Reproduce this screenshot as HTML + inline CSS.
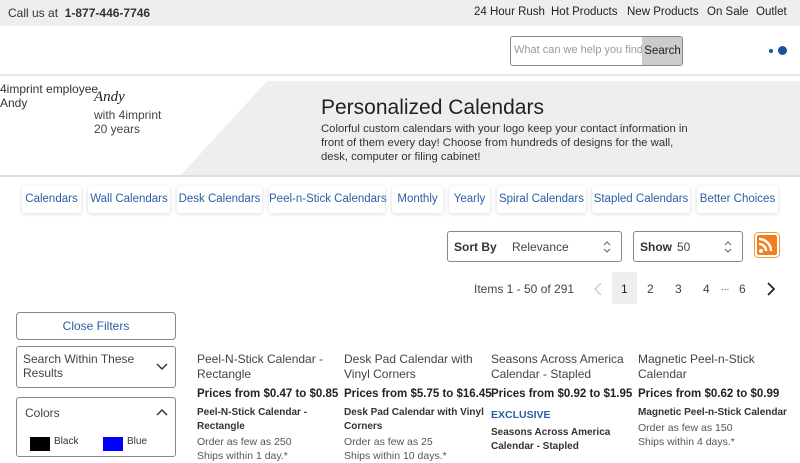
<!DOCTYPE html>
<html><head><meta charset="utf-8"><style>
*{margin:0;padding:0;box-sizing:border-box}
body{width:800px;height:450px;overflow:hidden;background:#fff;font-family:"Liberation Sans",sans-serif;color:#333;position:relative}
.a{position:absolute;white-space:nowrap}
.top{position:absolute;left:0;top:0;width:800px;height:26px;background:#eee}
.chip{position:absolute;white-space:nowrap;top:186px;height:27px;background:#fff;border-radius:3px;box-shadow:0 1px 4px rgba(0,0,0,.15);color:#2a5ea5;font-size:11.5px;line-height:27px;text-align:center}
.box{position:absolute;border:1px solid #888;border-radius:3px;background:#fff}
.pt{font-size:12px;color:#444;line-height:15px}
.pp{font-size:11.5px;font-weight:bold;color:#222}
.pn{font-size:10px;font-weight:bold;color:#333;line-height:14px}
.po{font-size:10.5px;color:#555;line-height:14px}
.nv{position:absolute;top:6px;font-size:11.5px;color:#222;white-space:nowrap}
</style></head><body>
<div class="top"></div>
<div class="a" style="left:8px;top:6px;font-size:12px;color:#333">Call us at &nbsp;<b>1-877-446-7746</b></div>
<div class="nv" style="left:474px">24 Hour Rush</div>
<div class="nv" style="left:551px">Hot Products</div>
<div class="nv" style="left:627px">New Products</div>
<div class="nv" style="left:707px">On Sale</div>
<div class="nv" style="left:756px">Outlet</div>
<div class="a" style="left:0;top:74px;width:800px;height:3px;background:linear-gradient(#ddd,#fff)"></div>
<div class="box" style="left:510px;top:36px;width:173px;height:30px;border-radius:3px;overflow:hidden">
<div class="a" style="left:3px;top:7px;font-size:11px;color:#999">What can we help you find?</div>
<div class="a" style="left:131px;top:0;width:41px;height:28px;background:#ccc;font-size:11.5px;color:#222;line-height:28px;text-align:center">Search</div></div>
<div class="a" style="left:769px;top:49px;width:4px;height:4px;border-radius:50%;background:#1c4fa0"></div>
<div class="a" style="left:778px;top:46px;width:9px;height:9px;border-radius:50%;background:#1c4fa0"></div>
<svg class="a" style="left:0;top:81px" width="800" height="96"><polygon points="267,0 800,0 800,95 180,95" fill="#eee"/><rect x="0" y="94" width="800" height="2" fill="#ddd"/></svg>
<div class="a" style="left:0;top:82px;font-size:12px;color:#333;line-height:14px">4imprint employee<br>Andy</div>
<div class="a" style="left:94px;top:89px;font-size:15px;font-style:italic;font-family:'Liberation Serif',serif;color:#222">Andy</div>
<div class="a" style="left:94px;top:108px;font-size:12px;color:#444;line-height:14px">with 4imprint<br>20 years</div>
<div class="a" style="left:321px;top:96px;font-size:21px;color:#222">Personalized Calendars</div>
<div class="a" style="left:321px;top:122px;font-size:11.3px;color:#333;line-height:14px">Colorful custom calendars with your logo keep your contact information in<br>front of them every day! Choose from hundreds of designs for the wall,<br>desk, computer or filing cabinet!</div>
<div class="chip" style="left:22px;width:59px">Calendars</div>
<div class="chip" style="left:88px;width:82px">Wall Calendars</div>
<div class="chip" style="left:177px;width:85px">Desk Calendars</div>
<div class="chip" style="left:269px;width:116px">Peel-n-Stick Calendars</div>
<div class="chip" style="left:392px;width:51px">Monthly</div>
<div class="chip" style="left:449px;width:41px">Yearly</div>
<div class="chip" style="left:497px;width:89px">Spiral Calendars</div>
<div class="chip" style="left:592px;width:98px">Stapled Calendars</div>
<div class="chip" style="left:697px;width:81px">Better Choices</div>
<div class="box" style="left:447px;top:231px;width:175px;height:31px">
<div class="a" style="left:6px;top:8px;font-size:12px;font-weight:bold;color:#333">Sort By</div>
<div class="a" style="left:64px;top:8px;font-size:12px;color:#444">Relevance</div>
<svg class="a" style="left:155px;top:9px" width="8" height="12"><path d="M1 4l3-3 3 3M1 8l3 3 3-3" stroke="#666" fill="none"/></svg></div>
<div class="box" style="left:633px;top:231px;width:110px;height:31px">
<div class="a" style="left:6px;top:8px;font-size:12px;font-weight:bold;color:#333">Show</div>
<div class="a" style="left:43px;top:8px;font-size:12px;color:#444">50</div>
<svg class="a" style="left:90px;top:9px" width="8" height="12"><path d="M1 4l3-3 3 3M1 8l3 3 3-3" stroke="#666" fill="none"/></svg></div>
<svg class="a" style="left:754px;top:232px" width="26" height="26"><rect x=".5" y=".5" width="25" height="25" rx="4" fill="#fff" stroke="#f29a3a"/><rect x="3" y="3" width="20" height="20" rx="2" fill="#f47c20"/><circle cx="7" cy="19" r="2" fill="#fff"/><path d="M5 12a7 7 0 0 1 7 7M5 7a12 12 0 0 1 12 12" stroke="#fff" stroke-width="2.5" fill="none"/></svg>
<div class="a" style="left:474px;top:282px;font-size:12px;color:#444">Items 1 - 50 of 291</div>
<svg class="a" style="left:594px;top:282px" width="8" height="14"><path d="M7 1L1 7l6 6" stroke="#ccc" stroke-width="1.5" fill="none"/></svg>
<div class="a" style="left:612px;top:272px;width:25px;height:32px;background:#eee"></div>
<div class="a" style="left:621px;top:282px;font-size:12px;color:#222">1</div>
<div class="a" style="left:647px;top:282px;font-size:12px;color:#444">2</div>
<div class="a" style="left:675px;top:282px;font-size:12px;color:#444">3</div>
<div class="a" style="left:703px;top:282px;font-size:12px;color:#444">4</div>
<div class="a" style="left:721px;top:282px;font-size:10px;color:#444">...</div>
<div class="a" style="left:739px;top:282px;font-size:12px;color:#444">6</div>
<svg class="a" style="left:767px;top:282px" width="8" height="14"><path d="M1 1l6 6-6 6" stroke="#222" stroke-width="1.8" fill="none"/></svg>
<div class="box" style="left:16px;top:312px;width:160px;height:28px;border-radius:4px;color:#2a5ea5;font-size:12px;text-align:center;line-height:26px">Close Filters</div>
<div class="box" style="left:16px;top:346px;width:160px;height:42px">
<div class="a" style="left:6px;top:5px;font-size:12px;color:#444;line-height:14px">Search Within These<br>Results</div>
<svg class="a" style="left:139px;top:16px" width="12" height="8"><path d="M1 1l5 5 5-5" stroke="#333" stroke-width="1.5" fill="none"/></svg></div>
<div class="box" style="left:16px;top:397px;width:160px;height:60px">
<div class="a" style="left:8px;top:8px;font-size:12px;color:#444">Colors</div>
<svg class="a" style="left:139px;top:10px" width="12" height="8"><path d="M1 7l5-5 5 5" stroke="#333" stroke-width="1.5" fill="none"/></svg>
<div class="a" style="left:13px;top:39px;width:20px;height:14px;background:#000"></div>
<div class="a" style="left:37px;top:38px;font-size:10px;color:#333">Black</div>
<div class="a" style="left:86px;top:39px;width:20px;height:14px;background:#00f"></div>
<div class="a" style="left:110px;top:38px;font-size:10px;color:#333">Blue</div></div>
<div class="a" style="left:197px;top:352px">
<div class="pt">Peel-N-Stick Calendar -<br>Rectangle</div>
<div class="pp" style="margin-top:6px">Prices from $0.47 to $0.85</div>
<div class="pn" style="margin-top:6px">Peel-N-Stick Calendar -<br>Rectangle</div>
<div class="po" style="margin-top:1px">Order as few as 250<br>Ships within 1 day.*</div></div>
<div class="a" style="left:344px;top:352px">
<div class="pt">Desk Pad Calendar with<br>Vinyl Corners</div>
<div class="pp" style="margin-top:6px">Prices from $5.75 to $16.45</div>
<div class="pn" style="margin-top:6px">Desk Pad Calendar with Vinyl<br>Corners</div>
<div class="po" style="margin-top:1px">Order as few as 25<br>Ships within 10 days.*</div></div>
<div class="a" style="left:491px;top:352px">
<div class="pt">Seasons Across America<br>Calendar - Stapled</div>
<div class="pp" style="margin-top:6px">Prices from $0.92 to $1.95</div>
<div class="a" style="left:0;top:57px;font-size:10.5px;font-weight:bold;color:#2a5ea5">EXCLUSIVE</div>
<div class="pn" style="margin-top:26px">Seasons Across America<br>Calendar - Stapled</div></div>
<div class="a" style="left:638px;top:352px">
<div class="pt">Magnetic Peel-n-Stick<br>Calendar</div>
<div class="pp" style="margin-top:6px">Prices from $0.62 to $0.99</div>
<div class="pn" style="margin-top:6px">Magnetic Peel-n-Stick Calendar</div>
<div class="po" style="margin-top:1px">Order as few as 150<br>Ships within 4 days.*</div></div>
</body></html>
